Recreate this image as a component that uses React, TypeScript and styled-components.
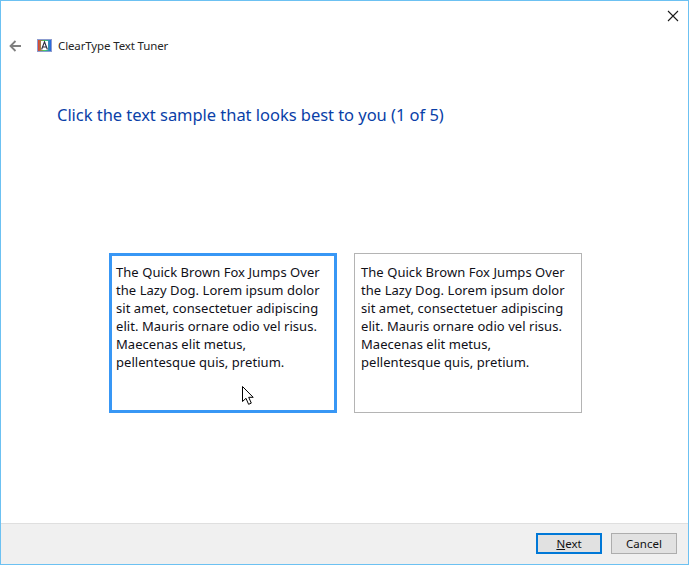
import React from 'react';
import styled, { createGlobalStyle } from 'styled-components';

const GlobalStyle = createGlobalStyle`
  html, body {
    margin: 0;
    padding: 0;
    background: #fff;
  }
  * {
    box-sizing: border-box;
  }
`;

const sampleLines = [
  'The Quick Brown Fox Jumps Over',
  'the Lazy Dog. Lorem ipsum dolor',
  'sit amet, consectetuer adipiscing',
  'elit. Mauris ornare odio vel risus.',
  'Maecenas elit metus,',
  'pellentesque quis, pretium.',
];

function TextSample({ selected }: { selected?: boolean }) {
  return (
    <S.Sample $selected={selected}>
      {sampleLines.map((line) => (
        <S.SampleLine key={line}>{line}</S.SampleLine>
      ))}
      {selected && (
        <S.Cursor width="14" height="21" viewBox="0 0 14 21">
          <path
            d="M1.5 1.5V16.5L5 13.3L7.6 19.3L10.3 18.1L7.7 12.3H12.2Z"
            fill="#fff"
            stroke="#000"
            strokeWidth="1"
            strokeLinejoin="miter"
          />
        </S.Cursor>
      )}
    </S.Sample>
  );
}

export default function App() {
  return (
    <S.Window>
      <GlobalStyle />
      <S.CloseRow>
        <svg width="12" height="12" viewBox="0 0 12 12">
          <path d="M1 1L11 11M11 1L1 11" stroke="#1a1a1a" strokeWidth="1.1" fill="none" />
        </svg>
      </S.CloseRow>
      <S.TitleRow>
        <svg width="12" height="12" viewBox="0 0 12 12">
          <path d="M12 6H1.5M6.5 1L1.5 6L6.5 11" stroke="#808080" strokeWidth="1.8" fill="none" />
        </svg>
        <S.AppIcon>
          <svg width="15" height="13" viewBox="0 0 15 13">
            <defs>
              <linearGradient id="spectrum" x1="0" x2="1" y1="0" y2="0">
                <stop offset="0" stopColor="#f03030" />
                <stop offset="0.5" stopColor="#40d860" />
                <stop offset="1" stopColor="#2858f0" />
              </linearGradient>
            </defs>
            <rect x="0.5" y="0.5" width="14" height="12" fill="url(#spectrum)" stroke="#8c9cd0" />
            <rect x="4" y="2" width="7" height="9" fill="#ffffff" />
            <path d="M4.6 10.5L7.5 2.8L10.4 10.5M5.6 8H9.4" stroke="#2a2a3a" strokeWidth="1.1" fill="none" />
          </svg>
        </S.AppIcon>
        <S.AppTitle>ClearType Text Tuner</S.AppTitle>
      </S.TitleRow>
      <S.Heading>Click the text sample that looks best to you (1 of 5)</S.Heading>
      <S.Samples>
        <TextSample selected />
        <TextSample />
      </S.Samples>
      <S.Footer>
        <S.Button $primary>
          <u>N</u>ext
        </S.Button>
        <S.Button>Cancel</S.Button>
      </S.Footer>
    </S.Window>
  );
}

const uiFont = `'Noto Sans', 'Open Sans', sans-serif`;

const S = {
  Window: styled.div`
    width: 689px;
    height: 565px;
    display: flex;
    flex-direction: column;
    border: 1px solid #6cc1f2;
    background: #fff;
    font-family: ${uiFont};
    overflow: hidden;
  `,
  CloseRow: styled.div`
    height: 28px;
    display: flex;
    justify-content: flex-end;
    padding: 9px 9px 0 0;
  `,
  TitleRow: styled.div`
    height: 33px;
    display: flex;
    align-items: center;
    padding-left: 8px;
  `,
  AppIcon: styled.span`
    display: flex;
    margin-left: 16px;
  `,
  AppTitle: styled.span`
    margin-left: 6px;
    font-size: 11.5px;
    color: #262626;
    letter-spacing: -0.13px;
  `,
  Heading: styled.h1`
    margin: 40px 0 0 56px;
    height: 25px;
    font-size: 16.5px;
    line-height: 25px;
    font-weight: 400;
    color: #0a3fa8;
    letter-spacing: -0.04px;
    white-space: nowrap;
  `,
  Samples: styled.div`
    display: flex;
    gap: 17px;
    margin: 126px 0 0 108px;
  `,
  Sample: styled.div<{ $selected?: boolean }>`
    position: relative;
    width: 228px;
    height: 160px;
    padding: ${(p) => (p.$selected ? '7px 0 0 4px' : '9px 0 0 6px')};
    border: ${(p) => (p.$selected ? '3px solid #3897f5' : '1px solid #b4b4b4')};
  `,
  SampleLine: styled.div`
    height: 18px;
    font-size: 13px;
    line-height: 18px;
    color: #101018;
    letter-spacing: 0.05px;
    white-space: nowrap;
  `,
  Cursor: styled.svg`
    position: absolute;
    left: 129px;
    top: 129px;
  `,
  Footer: styled.div`
    margin-top: auto;
    height: 41px;
    display: flex;
    justify-content: flex-end;
    gap: 9px;
    padding: 9px 11px 0 0;
    background: #f0f0f0;
    border-top: 1px solid #dfdfdf;
  `,
  Button: styled.button<{ $primary?: boolean }>`
    width: 66px;
    height: 21px;
    padding: 0;
    font-family: ${uiFont};
    font-size: 11.5px;
    line-height: 16px;
    color: #111;
    background: #e1e1e1;
    border: ${(p) => (p.$primary ? '2px solid #0078d7' : '1px solid #adadad')};
  `,
};
